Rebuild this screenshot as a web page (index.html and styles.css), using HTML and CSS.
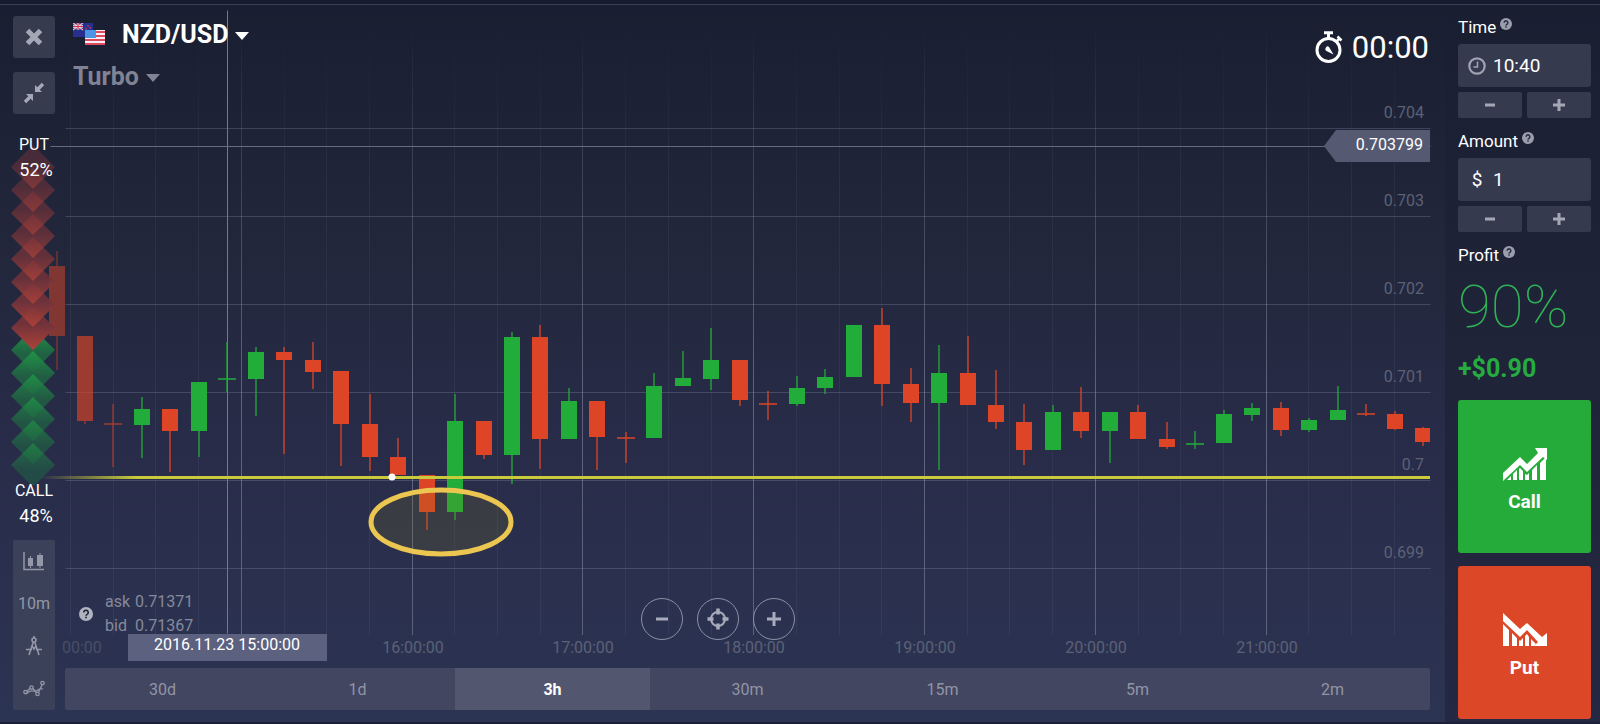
FILE: index.html
```html
<!DOCTYPE html>
<html lang="en">
<head>
  <meta charset="UTF-8" />
  <meta name="viewport" content="width=device-width, initial-scale=1.0"/>
  <title>NZD/USD - Turbo</title>
  <link rel="stylesheet" href="styles.css">
</head>
<body>

  <svg width="0" height="0" class="defs" aria-hidden="true">
    <symbol id="help" viewBox="0 0 12 12">
      <circle cx="6" cy="6" r="6" fill="currentColor"/>
      <path d="M4.1 4.7a1.9 1.9 0 1 1 2.9 1.6q-1 .6-1 1.2" fill="none" stroke="#22263a" stroke-width="1.4"/>
      <rect x="5.3" y="8.3" width="1.4" height="1.4" fill="#22263a"/>
    </symbol>
  </svg>

  <div class="app">
    <main class="chart">
      <svg class="plot" id="plot"></svg>

      <aside class="rail">
        <button class="square" aria-label="Close">
          <svg width="18" height="18" viewBox="0 0 18 18"><path d="M2.500 2.500l13 13M15.500 2.500l-13 13" stroke="currentColor" stroke-width="5"/></svg>
        </button>
        <button class="square" aria-label="Collapse">
          <svg width="22" height="22" viewBox="0 0 22 22" fill="currentColor"><path d="M12 10V3l2.300 2.300L18.800 .8l2.400 2.400L16.700 7.700 19 10zM10 12v7l-2.300-2.300-4.500 4.500-2.400-2.400 4.500-4.500L3 12z"/></svg>
        </button>

        <div class="mood">
          <svg class="arrows" id="arrows" width="44" height="352" viewBox="0 0 44 352"></svg>
          <div class="side"><span>PUT</span><b>52%</b></div>
          <div class="side"><span>CALL</span><b>48%</b></div>
        </div>

        <div class="tools">
          <button aria-label="Chart type">
            <svg width="22" height="20" viewBox="0 0 22 20"><path d="M1 1v17.500h20" fill="none" stroke="currentColor" stroke-width="1.500"/><path d="M5 7h5v8H5zM14 4h6v11h-6zM7 5h1v12H7zM16.500 2h1v15h-1z" fill="currentColor"/></svg>
          </button>
          <button>10m</button>
          <button aria-label="Drawing tools">
            <svg width="18" height="20" viewBox="0 0 18 20" fill="none" stroke="currentColor" stroke-width="1.600"><circle cx="9" cy="4" r="2"/><path d="M9 0v2M8.300 6L4 19M9.700 6L14 19M1 13.500h6M11 13.500h6M7 10l2 3 2-3"/></svg>
          </button>
          <button aria-label="Indicators">
            <svg width="22" height="18" viewBox="0 0 22 18" fill="none" stroke="currentColor" stroke-width="1.300"><circle cx="2.500" cy="12" r="1.700"/><circle cx="8.500" cy="7.500" r="1.700"/><circle cx="14.500" cy="14" r="1.700"/><circle cx="19.500" cy="3" r="1.700"/><path d="M4 11l3-2.500M10 8.500l3.300 4.200M15.500 12.500L19 5M3 14q4-4 7-3t5-1 5-1"/></svg>
          </button>
        </div>
      </aside>

      <section class="stage">
        <header class="head">
          <div class="asset">
            <button class="pair">
              <svg width="32" height="22" viewBox="0 0 32 22">
                <rect width="20" height="14" fill="#26308f"/>
                <path d="M0 0l10 7M10 0L0 7" stroke="#e7a9bb" stroke-width="1.500"/>
                <path d="M5 0v7M0 3.500h10" stroke="#f1e3ea" stroke-width="2.400"/>
                <path d="M5 0v7M0 3.500h10" stroke="#d2334f" stroke-width="1.200"/>
                <path d="M15 2v1.500M13 5v1.500M17 4v1.500" stroke="#d2334f" stroke-width="1.500"/>
                <rect x="12" y="7" width="20" height="15" fill="#f6eef2"/>
                <path d="M12 9h20M12 13h20M12 17h20M12 21h20" stroke="#dc4a60" stroke-width="1.900"/>
                <rect x="12" y="7" width="11" height="8" fill="#4c94e4"/>
              </svg>
              <span>NZD/USD</span><i class="caret"></i>
            </button>
            <button class="mode">Turbo<i class="caret"></i></button>
          </div>
          <div class="timer">
            <svg width="28" height="33" viewBox="0 0 28 33" fill="none" stroke="currentColor">
              <circle cx="13.500" cy="19" r="11.500" stroke-width="3"/>
              <path d="M9 1.700h9M13.500 2v5" stroke-width="3"/>
              <path d="M22.500 5.500l4 4M24.500 7.500l-3 3" stroke-width="2.500"/>
              <path d="M11 16.500a2 2 0 0 1 3-.5l4.500 7.500-7-3.500a2.200 2.200 0 0 1-.5-3.500z" fill="currentColor" stroke="none"/>
            </svg>
            <span>00:00</span>
          </div>
        </header>

        <div class="foot">
          <div class="quotes">
            <svg width="14" height="14"><use href="#help"/></svg>
            <dl>
              <dt>ask</dt><dd>0.71371</dd>
              <dt>bid</dt><dd>0.71367</dd>
            </dl>
          </div>
          <div class="zoom">
            <button aria-label="Zoom out"><svg width="14" height="14"><path d="M1 7h12" stroke="currentColor" stroke-width="3"/></svg></button>
            <button aria-label="Center">
              <svg width="22" height="22" viewBox="0 0 22 22" fill="none" stroke="currentColor"><circle cx="11" cy="11" r="7" stroke-width="2"/><path d="M11 .5v6M11 15.500v6M.5 11h6M15.500 11h6" stroke-width="3.500"/></svg>
            </button>
            <button aria-label="Zoom in"><svg width="14" height="14"><path d="M0 7h14M7 0v14" stroke="currentColor" stroke-width="3"/></svg></button>
          </div>
        </div>

        <nav class="ranges">
          <button>30d</button>
          <button>1d</button>
          <button class="active">3h</button>
          <button>30m</button>
          <button>15m</button>
          <button>5m</button>
          <button>2m</button>
        </nav>
      </section>
    </main>

    <aside class="panel">
      <div class="group">
        <label for="time">Time <svg width="12" height="12"><use href="#help"/></svg></label>
        <div class="field">
          <svg width="18" height="18" viewBox="0 0 18 18" fill="none" stroke="currentColor"><circle cx="9" cy="9" r="7.700" stroke-width="2.200"/><path d="M9.500 4.500V10H5.500" stroke-width="1.500"/></svg>
          <input id="time" type="text" value="10:40">
        </div>
        <div class="steps">
          <button aria-label="Earlier"><svg width="10" height="12"><path d="M0 6h10" stroke="currentColor" stroke-width="3"/></svg></button>
          <button aria-label="Later"><svg width="12" height="12"><path d="M0 6h12M6 0v12" stroke="currentColor" stroke-width="3"/></svg></button>
        </div>
      </div>

      <div class="group">
        <label for="amount">Amount <svg width="12" height="12"><use href="#help"/></svg></label>
        <div class="field">
          <span>$</span>
          <input id="amount" type="text" value="1">
        </div>
        <div class="steps">
          <button aria-label="Less"><svg width="10" height="12"><path d="M0 6h10" stroke="currentColor" stroke-width="3"/></svg></button>
          <button aria-label="More"><svg width="12" height="12"><path d="M0 6h12M6 0v12" stroke="currentColor" stroke-width="3"/></svg></button>
        </div>
      </div>

      <div class="profit">
        <div class="title">Profit <svg width="12" height="12"><use href="#help"/></svg></div>
        <div class="percent">90%</div>
        <div class="sum">+$0.90</div>
      </div>

      <button class="trade call">
        <svg width="44" height="34" viewBox="0 0 44 34" fill="currentColor">
          <path d="M0 26L17 10l7 7L35 6l-3-5h12v12l-4-3-16 15-7-7L0 34z"/>
          <path d="M4 33l4-4v4zM10 27l4-4v10h-4zM16 22l1-1 3 3v9h-4zM22 27l2 1 2-2v7h-4zM29 23l5-5v15h-5zM37 16l6-6v23h-6z"/>
        </svg>
        <span>Call</span>
      </button>
      <button class="trade put">
        <svg width="44" height="34" viewBox="0 0 44 34" fill="currentColor">
          <path d="M0 0l17 16 7-6 15 14 5-4v13H31l4-4-11-12-7 7L0 8z"/>
          <path d="M0 11l6 6v16H0zM9 20l5 5v8H9zM16 27l1 1 3-3v8h-4zM22 23l2-2 2 3v9h-4zM28 26l5 5-2 2h-3z"/>
        </svg>
        <span>Put</span>
      </button>
    </aside>
  </div>

  <script src="script.js"></script>
</body>
</html>
```
FILE: styles.css
```css
* {
  box-sizing: border-box;
}

body {
  font-family: Roboto, sans-serif;
  font-size: 16px;
  margin: 0;
  padding-top: 4px;
  min-height: 100vh;
  display: flex;
  background: #171b2e;
  color: #fff;
}

.defs {
  position: absolute;
}

button {
  font: inherit;
  color: inherit;
  background: none;
  border: none;
  padding: 0;
  cursor: pointer;
}

.app {
  flex: 1;
  display: flex;
  border-top: 1px solid #3a3f54;
  border-bottom: 2px solid #1b1f37;
}

/* chart */

.chart {
  position: relative;
  flex: 1;
  display: flex;
  gap: 10px;
  padding: 11px 15px 12px 13px;
  background: linear-gradient(#1a1e31, #22273c 35%, #282c49 62%, #2c3453);
}

.plot {
  position: absolute;
  left: 0;
  top: 0;
  width: 100%;
  height: 100%;
}

.plot text {
  font-size: 16px;
  fill: #5c6177;
}

.plot .bright {
  fill: #fff;
}

/* left rail */

.rail {
  position: relative;
  width: 42px;
  display: flex;
  flex-direction: column;
}

.square {
  display: flex;
  align-items: center;
  justify-content: center;
  height: 42px;
  margin-bottom: 14px;
  border-radius: 3px;
  background: #363b4e;
  color: #a4a8b6;
}

.mood {
  position: relative;
  flex: 1;
  display: flex;
  flex-direction: column;
  justify-content: space-between;
  padding: 4px 0 12px;
}

.arrows {
  position: absolute;
  left: -2px;
  top: 5px;
}

.side {
  position: relative;
  display: flex;
  flex-direction: column;
  align-items: center;
  line-height: 25px;
}

.side b {
  font-size: 18px;
  font-weight: 400;
  padding-left: 4px;
}

.tools {
  display: flex;
  flex-direction: column;
  height: 170px;
  border-radius: 2px;
  background: #3c415a;
  color: #9397a8;
}

.tools button {
  flex: 1;
  display: flex;
  align-items: center;
  justify-content: center;
}

/* chart header and footer */

.stage {
  position: relative;
  flex: 1;
  display: flex;
  flex-direction: column;
}

.head {
  flex: 1;
  display: flex;
  justify-content: space-between;
  align-items: flex-start;
  padding-left: 8px;
}

.asset {
  display: flex;
  flex-direction: column;
  align-items: flex-start;
  gap: 6px;
}

.pair,
.mode {
  display: flex;
  align-items: center;
  height: 36px;
  font-size: 25px;
  font-weight: 700;
}

.pair span {
  margin-left: 17px;
}

.mode {
  color: #7f8393;
}

.caret {
  margin: 3px 0 0 7px;
  border: 7px solid transparent;
  border-top: 8px solid currentColor;
  border-bottom: none;
}

.timer {
  display: flex;
  align-items: center;
  gap: 9px;
  height: 62px;
  padding-right: 1px;
  font-size: 31px;
}

.foot {
  display: grid;
  grid-template-columns: 1fr auto 1fr;
  align-items: end;
  padding: 0 73px 0 14px;
  margin-bottom: 28px;
}

.quotes {
  display: flex;
  align-items: center;
  gap: 12px;
  padding-bottom: 2px;
  color: #858a9c;
}

.quotes svg {
  color: #b0b3c0;
}

.quotes dl {
  display: grid;
  grid-template-columns: 30px auto;
  line-height: 24px;
  margin: 0;
}

.quotes dd {
  margin: 0;
}

.zoom {
  display: flex;
  gap: 14px;
}

.zoom button {
  display: flex;
  align-items: center;
  justify-content: center;
  width: 42px;
  height: 42px;
  border: 1px solid #8b90a6;
  border-radius: 50%;
  color: #a7abbb;
}

.ranges {
  display: flex;
  height: 42px;
  border-radius: 2px;
  background: #424660;
  color: #9195a6;
}

.ranges button {
  flex: 1;
}

.ranges .active {
  background: #52566f;
  color: #fff;
  font-weight: 700;
}

/* right panel */

.panel {
  width: 155px;
  display: flex;
  flex-direction: column;
  padding: 11px 9px 3px 13px;
  background: linear-gradient(#1a1e31, #1f2337 40%, #242842);
}

.group {
  display: flex;
  flex-direction: column;
  margin-bottom: 12px;
}

.panel label,
.panel .title {
  display: flex;
  gap: 4px;
  font-size: 17px;
  line-height: 22px;
}

.panel label {
  margin-bottom: 6px;
}

.panel label svg,
.panel .title svg {
  margin-top: 2px;
  color: #9a9eac;
}

.field {
  display: flex;
  align-items: center;
  gap: 7px;
  height: 43px;
  padding: 0 10px;
  border-radius: 3px;
  background: #363a4e;
  font-size: 19px;
}

.field svg {
  color: #a0a4b2;
}

.field span {
  width: 18px;
  text-align: center;
}

.field input {
  flex: 1;
  min-width: 0;
  padding: 0;
  border: none;
  outline: none;
  background: none;
  color: #fff;
  font: inherit;
}

.steps {
  display: flex;
  gap: 5px;
  margin-top: 5px;
}

.steps button {
  flex: 1;
  display: flex;
  align-items: center;
  justify-content: center;
  height: 26px;
  border-radius: 2px;
  background: #363a4e;
  color: #a4a8b6;
}

.percent {
  margin-top: 11px;
  font-size: 60px;
  font-weight: 100;
  line-height: 60px;
  color: #2fb256;
}

.sum {
  margin: 17px 0 16px;
  font-size: 25px;
  font-weight: 700;
  line-height: 30px;
  color: #25ab40;
}

.trade {
  flex: 1;
  display: flex;
  flex-direction: column;
  align-items: center;
  justify-content: center;
  gap: 9px;
  padding-top: 6px;
  border-radius: 3px;
  font-size: 19px;
  font-weight: 700;
}

.call {
  margin-bottom: 13px;
  background: #25ab3a;
}

.put {
  background: #db4727;
}
```
FILE: script.js
```js
const GREEN = "#22ac39";
const RED = "#dd4526";

// base size of the plot, everything is scaled from it
const BASE_W = 1445;
const BASE_H = 717;

// color, high, body top, body bottom, low
const candles = [
  ["r", 246, 261, 331, 365], ["r", 331, 331, 416, 419], ["r", 399, 418, 420, 462],
  ["g", 392, 404, 420, 453], ["r", 404, 404, 426, 467], ["g", 377, 377, 426, 452],
  ["g", 337, 373, 375, 387], ["g", 342, 347, 374, 411], ["r", 342, 347, 355, 449],
  ["r", 337, 355, 367, 384], ["r", 366, 366, 419, 461], ["r", 389, 419, 452, 466],
  ["r", 433, 452, 470, 470], ["r", 470, 470, 507, 525], ["g", 389, 416, 507, 515],
  ["r", 416, 416, 450, 454], ["g", 327, 332, 450, 479], ["r", 320, 332, 434, 464],
  ["g", 383, 396, 434, 434], ["r", 396, 396, 432, 465], ["r", 427, 432, 434, 458],
  ["g", 368, 381, 433, 433], ["g", 346, 373, 381, 381], ["g", 323, 355, 374, 385],
  ["r", 355, 355, 395, 401], ["r", 386, 398, 400, 415], ["g", 371, 383, 399, 401],
  ["g", 364, 372, 383, 389], ["g", 320, 320, 372, 372], ["r", 303, 320, 379, 401],
  ["r", 363, 379, 398, 417], ["g", 340, 368, 398, 465], ["r", 331, 368, 400, 400],
  ["r", 365, 400, 417, 424], ["r", 399, 417, 445, 460], ["g", 400, 407, 445, 445],
  ["r", 382, 407, 426, 433], ["g", 407, 407, 426, 458], ["r", 400, 407, 434, 434],
  ["r", 417, 434, 442, 444], ["g", 426, 438, 440, 444], ["g", 405, 409, 438, 438],
  ["g", 398, 403, 410, 416], ["r", 397, 403, 425, 431], ["g", 413, 415, 425, 427],
  ["g", 381, 405, 415, 415], ["r", 399, 408, 410, 411], ["r", 406, 409, 424, 425],
  ["r", 422, 423, 437, 441]
];

const prices = [["0.704", 123], ["0.703", 211], ["0.702", 299], ["0.701", 387], ["0.7", 475], ["0.699", 563]];
const hours = ["00:00", "", "16:00:00", "17:00:00", "18:00:00", "19:00:00", "20:00:00", "21:00:00"];

function drawPlot() {
  const plot = document.getElementById("plot");
  const kx = plot.clientWidth / BASE_W;
  const ky = plot.clientHeight / BASE_H;
  const X = v => Math.round(v * kx);
  const Y = v => Math.round(v * ky);
  const right = X(1430);
  let out = "";

  const line = (x1, y1, x2, y2, color) => {
    out += `<path d="M${x1 + 0.5} ${y1 + 0.5}L${x2 + 0.5} ${y2 + 0.5}" stroke="${color}"/>`;
  };
  const rect = (x, y, w, h, color) => {
    out += `<rect x="${x}" y="${y}" width="${w}" height="${h}" fill="${color}"/>`;
  };

  out += `<defs>
    <linearGradient id="level"><stop offset="0" stop-color="#c9cb3a" stop-opacity="0"/><stop offset=".07" stop-color="#c9cb3a"/></linearGradient>
    <linearGradient id="hour" x1="0" y1="0" x2="0" y2="1"><stop offset="0" stop-color="#777c93" stop-opacity="0"/><stop offset=".2" stop-color="#777c93" stop-opacity=".3"/><stop offset=".6" stop-color="#777c93" stop-opacity=".7"/><stop offset="1" stop-color="#777c93" stop-opacity=".65"/></linearGradient>
    <linearGradient id="quarter" x1="0" y1="0" x2="0" y2="1"><stop offset="0" stop-color="#969bb9" stop-opacity="0"/><stop offset=".25" stop-color="#969bb9" stop-opacity=".09"/></linearGradient>
  </defs>`;

  // grid, one line per 15 minutes
  for (let i = 0; i < 32; i++) {
    const x = X(70 + i * 42.7);
    const hour = i % 4 === 0 && i > 0;
    rect(x, Y(20), 1, Y(610), hour ? "url(#hour)" : "url(#quarter)");
  }
  prices.forEach(p => line(X(65), Y(p[1]), right, Y(p[1]), "rgba(150, 155, 180, .28)"));

  // crosshair
  line(X(227), Y(5), X(227), Y(628), "#747990");
  line(X(50), Y(141), right, Y(141), "#666b81");

  candles.forEach((c, i) => {
    const x = X(56.5 + i * 28.47);
    const color = c[0] === "g" ? GREEN : RED;
    const doji = c[3] - c[2] < 3;
    const w = Math.min(doji ? 18 : 16, right - x + 8);
    out += `<g opacity="${i < 1 ? 0.5 : i < 3 ? 0.65 : 1}">`;
    out += `<rect x="${x - 1}" y="${Y(c[1])}" width="2" height="${Y(c[4]) - Y(c[1])}" fill="${color}" opacity=".65"/>`;
    out += `<rect x="${x - (doji ? 9 : 8)}" y="${Y(c[2])}" width="${w}" height="${Y(c[3]) - Y(c[2])}" fill="${color}" opacity="${doji ? 0.75 : 1}"/>`;
    out += "</g>";
  });

  // open position level
  rect(X(40), Y(471), right - X(40), 3, "url(#level)");
  out += `<circle cx="${X(392)}" cy="${Y(472)}" r="3.500" fill="#fff"/>`;
  out += `<ellipse cx="${X(441)}" cy="${Y(517)}" rx="70" ry="32" fill="rgba(140, 130, 30, .17)" stroke="#ebc650" stroke-width="5"/>`;

  // axis labels
  prices.forEach(p => {
    out += `<text x="${X(1424)}" y="${Y(p[1]) - 10}" text-anchor="end">${p[0]}</text>`;
  });
  hours.forEach((h, i) => {
    if (i === 0) {
      out += `<text x="${X(62)}" y="${Y(648)}" opacity=".6">${h}</text>`;
    } else {
      out += `<text x="${X(71 + i * 170.8)}" y="${Y(648)}" text-anchor="middle">${h}</text>`;
    }
  });

  // crosshair tags
  const ty = Y(141);
  out += `<path d="M${right - 106} ${ty}l12 -16H${right}v32H${right - 94}z" fill="#555a72"/>`;
  out += `<text class="bright" x="${X(1423)}" y="${ty + 4}" text-anchor="end">0.703799</text>`;
  rect(X(227) - 99, Y(629), 199, 27, "#5d6180");
  out += `<text class="bright" x="${X(227)}" y="${Y(645)}" text-anchor="middle">2016.11.23 15:00:00</text>`;

  plot.innerHTML = out;
}

function drawArrows() {
  const diamond = (y, fill, opacity) =>
    `<path d="M22 ${y - 22}L44 ${y}L22 ${y + 22}L0 ${y}z" fill="url(#${fill})" opacity="${opacity}"/>`;
  let out = `<defs>
    <linearGradient id="down" x1="0" y1="0" x2="0" y2="1"><stop offset=".4" stop-color="#71323a"/><stop offset="1" stop-color="#b04238"/></linearGradient>
    <linearGradient id="up" x1="0" y1="0" x2="0" y2="1"><stop offset="0" stop-color="#219646"/><stop offset=".6" stop-color="#206043"/></linearGradient>
  </defs>`;
  for (let i = 0; i < 6; i++) {
    out += diamond(217 + i * 23, "up", 1 - i * 0.08);
  }
  for (let i = 7; i >= 0; i--) {
    out += diamond(34 + i * 23, "down", 0.5 + i * 0.07);
  }
  document.getElementById("arrows").innerHTML = out;
}

drawArrows();
drawPlot();
window.addEventListener("resize", drawPlot);
```
